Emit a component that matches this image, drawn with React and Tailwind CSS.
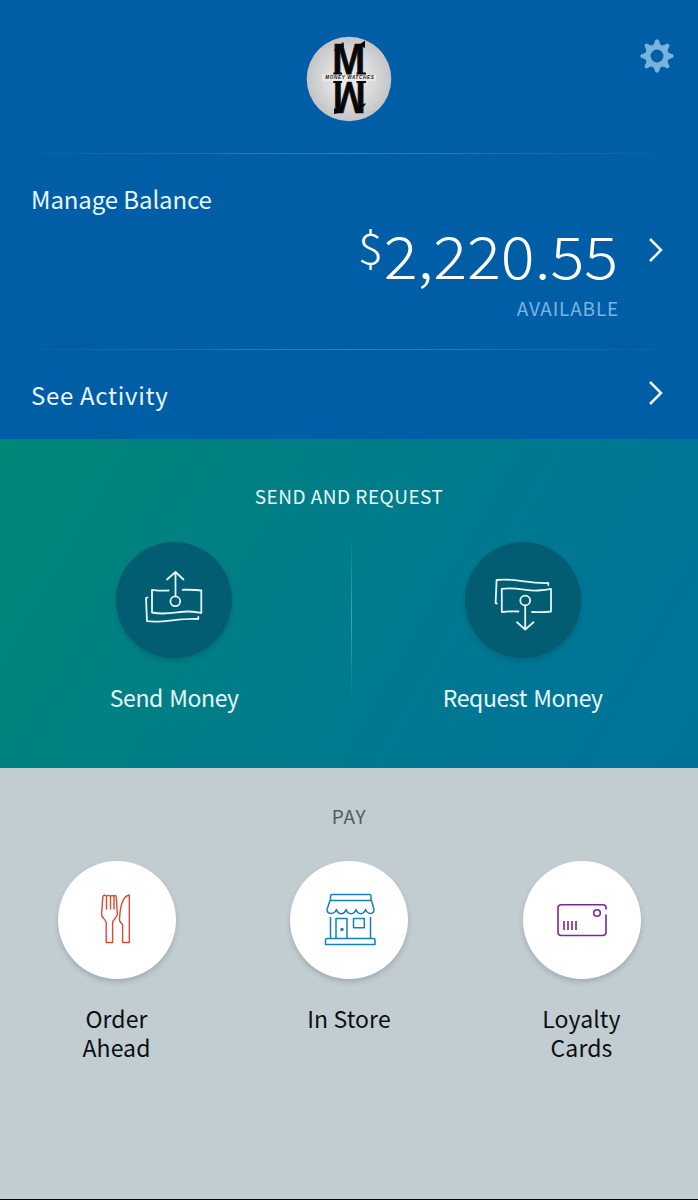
const font = "font-['Noto_Sans_CJK_SC','Noto_Sans',sans-serif]";

function Avatar() {
  return (
    <svg className="h-[86px] w-[86px]" viewBox="306 36 86 86">
      <defs>
        <radialGradient id="disc" cx="0.5" cy="0.5" r="0.5">
          <stop offset="0" stopColor="#efefef" />
          <stop offset="0.55" stopColor="#dcdcdc" />
          <stop offset="1" stopColor="#c3c4c6" />
        </radialGradient>
      </defs>
      <circle cx="349" cy="79" r="42.3" fill="url(#disc)" />
      <g fill="#080808" stroke="#080808" strokeWidth="0.6" fontFamily="Liberation Sans" fontWeight="700">
        <text transform="translate(332.200 74.500) scale(0.900 1)" fontSize="44">M</text>
        <text transform="translate(365.800 81.500) rotate(180) scale(0.900 1)" fontSize="44">M</text>
      </g>
      <g fill="#080808">
        <path d="M334.500 51V49L343.500 42L344 47ZM365 40.500V48L359 45ZM334 108V114L340 112.500ZM365.500 103V104.500L357 113.500V108Z" />
        <path d="M333.300 72.500H342V75H333.300ZM356.500 72.500H366V75H356.500ZM333.300 81H342V83H333.300ZM356.500 81H366V83H356.500Z" />
      </g>
      <rect x="322" y="74.500" width="54" height="6.500" fill="#e9e9e9" />
      <text x="325.300" y="79.300" textLength="48.500" fontFamily="Liberation Sans" fontStyle="italic" fontWeight="700" fontSize="4.600" fill="#161616">MONEY WATCHES</text>
    </svg>
  );
}

function Gear() {
  const teeth = [0, 45, 90, 135, 180, 225, 270, 315];
  return (
    <svg className="h-[36px] w-[36px]" viewBox="-18 -18 36 36" fill="#78b2df">
      <circle r="9" fill="none" stroke="#78b2df" strokeWidth="5.200" />
      {teeth.map((a) => (
        <path key={a} transform={`rotate(${a})`} d="M-4.600 -10.500Q-2.600 -12 -2.100 -15Q-1.700 -16.700 0 -16.700Q1.700 -16.700 2.100 -15Q2.600 -12 4.600 -10.500Z" />
      ))}
    </svg>
  );
}

function Chevron() {
  return (
    <svg className="h-[26px] w-[16px]" viewBox="0 0 16 26" fill="none" stroke="#f2faff" strokeWidth="2.500">
      <path d="M2 2L13 13L2 24" />
    </svg>
  );
}

function Divider() {
  return <div className="h-px w-full bg-linear-to-r from-[#3a8ccc]/0 via-[#2f82c2] to-[#3a8ccc]/0" />;
}

function SendIcon() {
  return (
    <svg className="h-[116px] w-[116px]" viewBox="117 542 116 116" fill="none" stroke="#e4f7fb" strokeWidth="1.800" strokeLinecap="round" strokeLinejoin="round">
      <path d="M176.500 596V572.500M168 579.500L176.500 572L184.500 579.500" />
      <circle cx="176.300" cy="601.300" r="4.900" />
      <path d="M169.500 590.500C164 591 158 590.500 153 589.800V612.500C167 615.500 179 611.500 189 611.500C194 611.500 198 612.300 202.300 613V590.500C196 589.500 190 589.700 183.500 589.800" />
      <path d="M148.500 597.500L147 598L148 621.200C165 623.500 180 617.500 199.300 619V616.800" />
    </svg>
  );
}

function RequestIcon() {
  return (
    <svg className="h-[116px] w-[116px]" viewBox="465 542 116 116" fill="none" stroke="#e4f7fb" strokeWidth="1.800" strokeLinecap="round" strokeLinejoin="round">
      <path d="M525.200 605.500V629M517 622.300L525.200 629.500L533.500 622.300" />
      <circle cx="525.200" cy="600.500" r="4.900" />
      <path d="M518.500 611.500C513 611 507 611.500 501.800 612V588.800C516 586.500 528 591.500 538 590.500C543 590 547 589.500 551 588.800V611.500C544 612.500 538 612 532 612" />
      <path d="M496.800 603.500L495.600 603.300L496.600 580C513 577.500 528 584 548.300 583V585" />
    </svg>
  );
}

function FoodIcon() {
  return (
    <svg className="h-[118px] w-[118px]" viewBox="58 861 118 118" fill="none" stroke="#dc4a32" strokeWidth="1.400" strokeLinejoin="round">
      <path d="M106.200 942.500V923C106.200 919 101 918 101.600 914L102.800 897C103.200 894.500 106.500 895 106.500 897V909V897C106.800 894.800 110.300 895 110.500 897V909V897C110.800 895 114 895 114 897V909V897C114 895 116 895 116.300 897L117.300 914C117.500 918 112.600 919 112.600 923V942.500Z" />
      <path d="M122.600 942.500V925.500C122.600 923 119.300 923 119.500 919.500C120 908 122.500 896 129.300 895V942.500Z" />
    </svg>
  );
}

function StoreIcon() {
  return (
    <svg className="h-[118px] w-[118px]" viewBox="290 861 118 118" fill="none" stroke="#1681b7" strokeWidth="1.500" strokeLinejoin="round">
      <path d="M330.500 900.500V896Q330.500 894.500 332 894.500H369.500Q371 894.500 371 896V900.500Z" />
      <path d="M330 900.500L327 909.500C327 914.500 334 915 336.500 909.500C338 915 344.500 915 346 909.500C348 915 354 915 356 909.500C358 915 363.500 915 365.500 909.500C368 915 374 914.500 374 909.500L371.500 900.500" />
      <path d="M330.500 917V938.500M370.500 917V938.500M336 938.500V918.500H347V938.500M353.500 918.500H364.300V927.700H353.500Z" />
      <path d="M325.500 944.500V940Q325.500 938.500 327 938.500H373.500Q375 938.500 375 940V944.500Z" />
      <circle cx="342" cy="929.500" r="1" fill="#1681b7" />
    </svg>
  );
}

function CardIcon() {
  return (
    <svg className="h-[118px] w-[118px]" viewBox="523 861 118 118" fill="none" stroke="#7a2697" strokeWidth="1.600">
      <path d="M606 909.500V907.500Q606 904.700 603 904.700H561.500Q558 904.700 558 908V932Q558 935.500 561.500 935.500H602.500Q606 935.500 606 932V914.500" />
      <path d="M564 921V930M568 921V930M572 921V930M576 921V930" />
      <circle cx="597" cy="913" r="3.300" />
    </svg>
  );
}

function Transfer({ icon, label }) {
  return (
    <button className="flex flex-1 flex-col items-center">
      <span className="h-[116px] w-[116px] rounded-full bg-[#025c72] shadow-[0_3px_5px_rgba(0,60,80,0.25)]">{icon}</span>
      <span className="mt-[24px] text-[23px] leading-[30px] tracking-[-0.4px] [word-spacing:1.500px] text-[#e8f9fc]">{label}</span>
    </button>
  );
}

function PayOption({ icon, label }) {
  return (
    <button className="flex flex-col items-center">
      <span className="h-[118px] w-[118px] rounded-full bg-white shadow-[0_3px_5px_rgba(60,80,90,0.25)]">{icon}</span>
      <span className="mt-[25px] w-28 text-center text-[23px] leading-[29px] tracking-[0.1px] text-[#0b0f12]">{label}</span>
    </button>
  );
}

export default function App() {
  return (
    <main className={`flex h-[1200px] w-[698px] flex-col overflow-hidden ${font}`}>
      <section className="flex h-[439px] flex-col bg-[#005ea6] text-[#e9f6ff]">
        <header className="grid h-[153px] grid-cols-3 pt-9">
          <span />
          <div className="flex justify-center"><Avatar /></div>
          <div className="flex justify-end pt-[2px] pr-[23px]"><Gear /></div>
        </header>
        <Divider />
        <div className="flex h-[195px] flex-col pt-[30px] pr-[34px] pl-[31px]">
          <h2 className="text-[24px] leading-[30px] tracking-[-0.1px]">Manage Balance</h2>
          <div className="flex items-start justify-end">
            <div className="flex flex-col items-end">
              <div className="flex h-[81px] origin-right scale-x-[1.080] items-start font-light text-white">
                <span className="mt-[9px] mr-[1px] text-[43px] leading-[44px]">$</span>
                <span className="mt-[4px] text-[58.5px] leading-[72px]">2,220.55</span>
              </div>
              <span className="mt-px -mr-px text-[19px] leading-[24px] tracking-[0.8px] text-[#78b4e1]">AVAILABLE</span>
            </div>
            <div className="mt-[23px] ml-[30px]"><Chevron /></div>
          </div>
        </div>
        <Divider />
        <div className="flex h-[89px] items-start justify-between pt-[30px] pr-[34px] pl-[31px]">
          <span className="text-[24px] leading-[30px] tracking-[0.7px]">See Activity</span>
          <Chevron />
        </div>
      </section>

      <section className="flex h-[329px] flex-col bg-[linear-gradient(120deg,#008777_0%,#007d88_42%,#007597_80%,#00739b_100%)] pt-[45px]">
        <h3 className="text-center text-[19px] leading-[24px] tracking-[0.5px] text-[#e8f9fc]">SEND AND REQUEST</h3>
        <div className="mt-[34px] flex pr-px">
          <Transfer icon={<SendIcon />} label="Send Money" />
          <div className="relative left-[2px] -mt-2 -mr-px h-[165px] w-px bg-linear-to-b from-[#5bb8c4]/0 via-[#5bb8c4]/70 to-[#5bb8c4]/0" />
          <Transfer icon={<RequestIcon />} label="Request Money" />
        </div>
      </section>

      <section className="flex h-[431px] flex-col bg-[#c2cdd2] pt-[36px]">
        <h3 className="text-center text-[19px] leading-[24px] tracking-[0.7px] text-[#545b60]">PAY</h3>
        <div className="mt-[33px] flex justify-between px-[57.5px]">
          <PayOption icon={<FoodIcon />} label={<>Order<br />Ahead</>} />
          <PayOption icon={<StoreIcon />} label="In Store" />
          <PayOption icon={<CardIcon />} label={<>Loyalty<br />Cards</>} />
        </div>
      </section>
      <div className="h-px bg-black" />
    </main>
  );
}
